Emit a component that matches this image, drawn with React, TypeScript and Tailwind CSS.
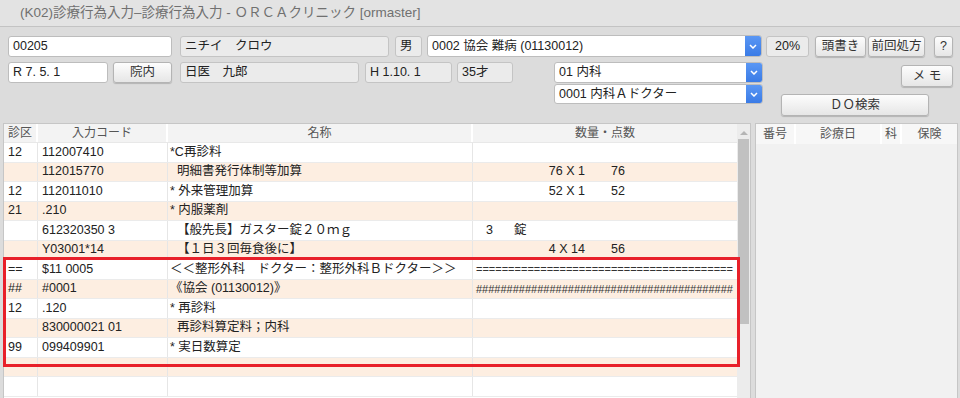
import React from 'react';

type Row = { ku: string; code: string; name: string; qty?: React.ReactNode; fill?: string };

const FONT = { fontFamily: '"Liberation Sans", "Noto Sans CJK JP", sans-serif' };

function QtyPts({ q, p }: { q: string; p: string }) {
  return (
    <>
      <span className="inline-block w-[112px] text-right">{q}</span>
      <span className="ml-[26px]">{p}</span>
    </>
  );
}

const rows: Row[] = [
  { ku: '12', code: '112007410', name: '*C再診料' },
  { ku: '', code: '112015770', name: '  明細書発行体制等加算', qty: <QtyPts q="76 X 1" p="76" /> },
  { ku: '12', code: '112011010', name: '* 外来管理加算', qty: <QtyPts q="52 X 1" p="52" /> },
  { ku: '21', code: '.210', name: '* 内服薬剤' },
  {
    ku: '',
    code: '612320350 3',
    name: '  【般先長】ガスター錠２０ｍｇ',
    qty: (
      <>
        <span className="ml-[13px]">3</span>
        <span className="ml-[21px]">錠</span>
      </>
    ),
  },
  { ku: '', code: 'Y03001*14', name: '  【１日３回毎食後に】', qty: <QtyPts q="4 X 14" p="56" /> },
  { ku: '==', code: '$11 0005', name: '＜＜整形外科　ドクター：整形外科Ｂドクター＞＞', fill: '='.repeat(40) },
  { ku: '##', code: '#0001', name: '《協会 (01130012)》', fill: '#'.repeat(42) },
  { ku: '12', code: '.120', name: '* 再診料' },
  { ku: '', code: '830000021 01', name: '  再診料算定料；内科' },
  { ku: '99', code: '099409901', name: '* 実日数算定' },
  { ku: '', code: '', name: '' },
  { ku: '', code: '', name: '' },
];

function Field({ w, gray, children, className = '' }: { w: string; gray?: boolean; children?: React.ReactNode; className?: string }) {
  return (
    <div
      className={`${w} h-[21px] flex items-center px-[4px] rounded-[3px] border whitespace-nowrap overflow-hidden ${
        gray ? 'bg-[#ebebeb] border-[#c4c4c4]' : 'bg-white border-[#bdbdbd]'
      } ${className}`}
    >
      {children}
    </div>
  );
}

function Btn({ w, h = 'h-[21px]', children, className = '' }: { w: string; h?: string; children: React.ReactNode; className?: string }) {
  return (
    <div
      className={`${w} ${h} flex items-center justify-center rounded-[3px] border border-[#b4b4b4] bg-gradient-to-b from-[#fdfdfd] to-[#e6e6e6] shadow-[0_1px_1px_rgba(0,0,0,0.18)] text-[#333] whitespace-nowrap ${className}`}
    >
      {children}
    </div>
  );
}

function Combo({ w, h, children }: { w: string; h: string; children: React.ReactNode }) {
  return (
    <div className={`${w} ${h} flex rounded-[3px] border border-[#bdbdbd] bg-white overflow-hidden`}>
      <div className="flex-1 flex items-center px-[4px] whitespace-nowrap">{children}</div>
      <div className="w-[16px] flex items-center justify-center bg-gradient-to-b from-[#5a97f4] to-[#3a7be6]">
        <svg width="8" height="5" viewBox="0 0 8 5">
          <path d="M1 1l3 3 3-3" stroke="white" strokeWidth="1.5" fill="none" />
        </svg>
      </div>
    </div>
  );
}

export default function App() {
  return (
    <div style={FONT} className="relative w-[960px] h-[398px] overflow-hidden bg-[#dcdcdc] text-[12.5px] text-[#222]">
      {/* title bar */}
      <div className="h-[27px] flex items-center pl-[20px] bg-[#e3e3e3] border-b border-[#c3c3c3] text-[13.5px] text-[#707070]">
        (K02)診療行為入力–診療行為入力 - ＯＲＣＡクリニック [ormaster]
      </div>

      {/* form */}
      <div className="h-[96px] pt-[8px]">
        <div className="flex items-center">
          <Field w="w-[164px] ml-[8px]">00205</Field>
          <Field w="w-[209px] ml-[8px]" gray>ニチイ　クロウ</Field>
          <Field w="w-[27px] ml-[6px]" gray>男</Field>
          <div className="ml-[5px]">
            <Combo w="w-[335px]" h="h-[22px]">0002 協会 難病 (01130012)</Combo>
          </div>
          <Field w="w-[43px] ml-[4px] justify-center" gray>20%</Field>
          <Btn w="w-[51px] ml-[6px]">頭書き</Btn>
          <Btn w="w-[57px] ml-[2px]">前回処方</Btn>
          <Btn w="w-[19px] ml-[9px]">?</Btn>
        </div>
        <div className="flex mt-[5px]">
          <Field w="w-[100px] ml-[8px]">R 7. 5. 1</Field>
          <Btn w="w-[59px] ml-[5px]">院内</Btn>
          <Field w="w-[179px] ml-[8px]" gray>日医　九郎</Field>
          <Field w="w-[87px] ml-[6px]" gray>H 1.10. 1</Field>
          <Field w="w-[56px] ml-[5px]" gray>35才</Field>
          <div className="ml-[41px] flex flex-col gap-[1px]">
            <Combo w="w-[209px]" h="h-[21px]">01 内科</Combo>
            <Combo w="w-[209px]" h="h-[20px]">0001 内科Ａドクター</Combo>
          </div>
          <div className="flex-1 flex flex-col">
            <Btn w="w-[52px] ml-[138px] mt-[3px]" h="h-[22px]">メ モ</Btn>
            <Btn w="w-[148px] ml-[18px] mt-[7px]" h="h-[22px]">ＤＯ検索</Btn>
          </div>
        </div>
      </div>

      {/* main area */}
      <div className="flex pl-[3px] gap-[4px] h-[276px]">
        <div className="w-[748px] border border-[#c6c6c6] bg-white flex">
          <div className="w-[733px] flex flex-col">
            <div className="h-[19px] flex bg-[#f3f3f3] text-[#555] text-[12px] border-b border-[#e8e8e8]">
              <div className="w-[34px] flex items-center justify-center border-r-2 border-white">診区</div>
              <div className="w-[130px] flex items-center justify-center border-r-2 border-white">入力コード</div>
              <div className="w-[305px] flex items-center justify-center border-r-2 border-white">名称</div>
              <div className="flex-1 flex items-center justify-center">数量・点数</div>
            </div>
            {rows.map((r, i) => (
              <div
                key={i}
                className={`h-[19.5px] flex border-b border-[#ebebeb] ${i % 2 ? 'bg-[#fdeee1]' : 'bg-white'}`}
              >
                <div className="w-[34px] flex items-center pl-[4px] border-r border-[#e6e6e6]">{r.ku}</div>
                <div className="w-[130px] flex items-center pl-[4px] border-r border-[#e6e6e6]">{r.code}</div>
                <div className="w-[305px] flex items-center pl-[2px] border-r border-[#e6e6e6] whitespace-pre">{r.name}</div>
                <div className="flex-1 flex items-center overflow-hidden whitespace-pre">
                  {r.fill ? <span className="pl-[3px] text-[11px] text-[#333]">{r.fill}</span> : r.qty}
                </div>
              </div>
            ))}
          </div>
          {/* scrollbar */}
          <div className="w-[13px] bg-[#ececec] flex flex-col items-center">
            <svg width="8" height="5" viewBox="0 0 8 5" className="mt-[6px]">
              <path d="M0 5L4 1L8 5Z" fill="#b5b5b5" />
            </svg>
            <div className="mt-[4px] w-[11px] h-[185px] bg-[#c1c1c1]" />
          </div>
        </div>

        {/* right panel */}
        <div className="w-[203px] border border-[#c6c6c6] bg-[#f1f1f1]">
          <div className="h-[20px] flex bg-[#f7f7f7] text-[#555] text-[12px]">
            <div className="w-[40px] flex items-center justify-center border-r-2 border-white">番号</div>
            <div className="w-[86px] flex items-center justify-center border-r-2 border-white">診療日</div>
            <div className="w-[20px] flex items-center justify-center border-r-2 border-white">科</div>
            <div className="flex-1 flex items-center justify-center">保険</div>
          </div>
        </div>
      </div>

      {/* annotation */}
      <div className="absolute left-[3px] top-[257px] w-[737px] h-[110px] border-[3px] border-[#e8202a]" />
    </div>
  );
}
